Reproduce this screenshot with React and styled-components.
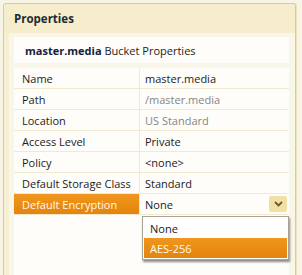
import React from "react";
import styled, { createGlobalStyle } from "styled-components";

const GlobalStyle = createGlobalStyle`
    html, body {
        margin: 0;
        padding: 0;
        background: #f8f5e6;
    }
    body {
        font-family: 'Open Sans', 'Noto Sans', sans-serif;
        font-size: 11px;
        color: #1b1b1b;
    }
`

const rows = [
    { label: "Name", value: "master.media" },
    { label: "Path", value: "/master.media", muted: true },
    { label: "Location", value: "US Standard", muted: true },
    { label: "Access Level", value: "Private" },
    { label: "Policy", value: "<none>" },
    { label: "Default Storage Class", value: "Standard" },
];

const Chevron = () => (
    <svg width="9" height="6" viewBox="0 0 9 6">
        <path d="M1 1 L4.5 4.5 L8 1" fill="none" stroke="#6e5a22" strokeWidth="1.8" />
    </svg>
);

const App = () => {
    return (
        <>
            <GlobalStyle />
            <Page>
                <Panel>
                    <Header>Properties</Header>
                    <Body>
                        <TitleBox>
                            <b>master.media</b>&nbsp;Bucket Properties
                        </TitleBox>
                        <Table>
                            {rows.map((r) =>
                                <Row key={r.label}>
                                    <Label>{r.label}</Label>
                                    <Value muted={r.muted}>{r.value}</Value>
                                </Row>
                            )}
                            <Row>
                                <Label selected>Default Encryption</Label>
                                <Value>
                                    None
                                    <DropButton><Chevron /></DropButton>
                                    <Popup>
                                        <Option>None</Option>
                                        <Option active>AES-256</Option>
                                    </Popup>
                                </Value>
                            </Row>
                        </Table>
                    </Body>
                </Panel>
            </Page>
        </>
    )
}

const Page = styled.div`
    width: 302px;
    height: 275px;
    box-sizing: border-box;
    padding: 3px 6px 0 3px;
    overflow: hidden;
    display: flex;
`
const Panel = styled.div`
    flex: 1;
    display: flex;
    flex-direction: column;
    border: 1px solid #d9cb93;
    border-bottom: none;
    border-radius: 3px 3px 0 0;
    box-shadow: 1px 0 0 #ece2bb;
    overflow: hidden;
`
const Header = styled.div`
    height: 29px;
    flex-shrink: 0;
    display: flex;
    align-items: center;
    padding-left: 10px;
    background: #f5edcc;
    font-weight: 700;
    font-size: 11.5px;
    color: #1c2a38;
`
const Body = styled.div`
    flex: 1;
    display: flex;
    flex-direction: column;
    gap: 5px;
    padding: 4px 6px 0 5px;
    border-left: 5px solid #f6efd2;
    background: #f8f6e8;
`
const TitleBox = styled.div`
    height: 26px;
    flex-shrink: 0;
    display: flex;
    align-items: center;
    padding-left: 11px;
    background: #fefdfa;
    color: #1c1c1c;
    b {
        color: #14213a;
    }
`
const Table = styled.div`
    flex: 1;
    background: #fefdfa;
`
const Row = styled.div`
    display: grid;
    grid-template-columns: 126px 1fr;
    height: 20px;
    border-bottom: 1px solid #f2eace;
`
const Label = styled.div`
    display: flex;
    align-items: center;
    padding-left: 8px;
    border-right: 1px solid #f2eace;
    color: ${(p) => (p.selected ? "#fffaf0" : "#1b1b1b")};
    background: ${(p) => (p.selected ? "linear-gradient(#f0961d, #e4840c)" : "transparent")};
`
const Value = styled.div`
    position: relative;
    display: flex;
    align-items: center;
    padding-left: 5px;
    color: ${(p) => (p.muted ? "#858585" : "#1b1b1b")};
`
const DropButton = styled.div`
    margin-left: auto;
    margin-right: 2px;
    width: 18px;
    height: 16px;
    display: flex;
    align-items: center;
    justify-content: center;
    border-radius: 2px;
    background: #f0e0a6;
`
const Popup = styled.div`
    position: absolute;
    top: calc(100% + 2px);
    left: 2px;
    right: 0;
    padding: 1px;
    background: #fefefe;
    border: 1px solid #a9a395;
    box-shadow: 1px 2px 2px rgba(0, 0, 0, 0.45);
    z-index: 2;
`
const Option = styled.div`
    height: 20px;
    display: flex;
    align-items: center;
    padding-left: 6px;
    color: ${(p) => (p.active ? "#fffaf0" : "#1b1b1b")};
    background: ${(p) => (p.active ? "linear-gradient(#f0961d, #e4840c)" : "transparent")};
`

export default App;
